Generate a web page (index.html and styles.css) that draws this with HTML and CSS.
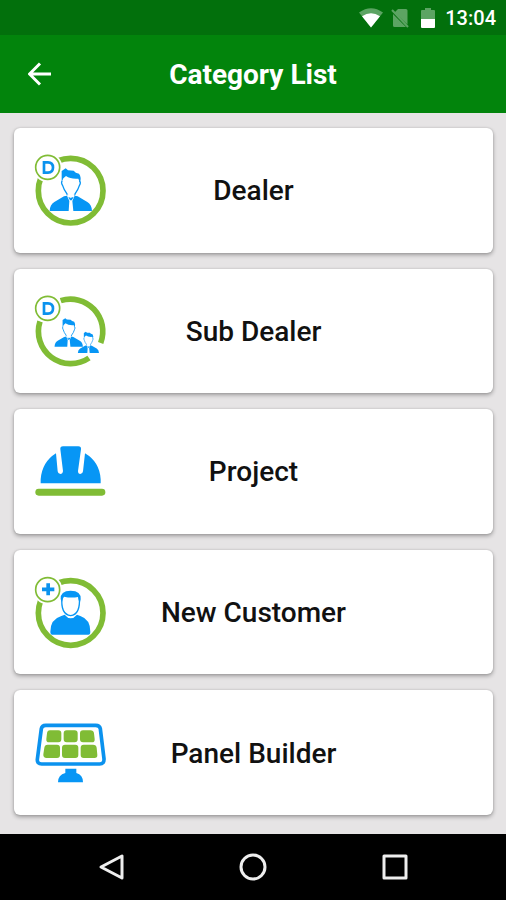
FILE: index.html
```html
<!DOCTYPE html>
<html lang="en">
<head>
<meta charset="utf-8">
<meta name="viewport" content="width=device-width, initial-scale=1">
<title>Category List</title>
<link rel="stylesheet" href="styles.css">
</head>
<body>
<div class="screen">
  <div class="status">
    <svg class="status-icon" viewBox="0 0 24 22" aria-hidden="true">
      <path class="dim" d="M0 5.500Q12-3 24 5.500L12 20.500Z"/>
      <path d="M3 9.200Q12 3.500 21 9.200L12 20.500Z"/>
    </svg>
    <svg class="status-icon sim" viewBox="0 0 18 22" aria-hidden="true">
      <path class="dim" d="M7 2h8q1.500 0 1.500 1.500v14L3.500 5.500ZM2 7l13 13H3.500Q2 20 2 18.500Z"/>
      <path class="slash" d="M1 3l16 17"/>
    </svg>
    <svg class="status-icon battery" viewBox="0 0 14 22" aria-hidden="true">
      <path class="dim" d="M4 1h6v2h3q1 0 1 1v8H0V4q0-1 1-1h3Z"/>
      <path d="M0 12h14v8q0 1-1 1H1q-1 0-1-1Z"/>
    </svg>
    <time class="clock">13:04</time>
  </div>

  <header class="app-bar">
    <button class="back" type="button" aria-label="Back">
      <svg viewBox="0 0 24 24" aria-hidden="true"><path d="M23 12H2M12 1.500L1.500 12L12 22.500"/></svg>
    </button>
    <h1 class="title">Category List</h1>
  </header>

  <main class="list">
    <button class="card" type="button">
      <svg class="icon" viewBox="45 43 216 216" aria-hidden="true">
        <circle class="ring" cx="152" cy="153" r="97"/>
        <circle class="gap" cx="83" cy="83" r="44"/>
        <circle class="badge" cx="83" cy="83" r="36"/>
        <path class="letter" d="M72 68H84Q99 68 99 83.500T84 99H72Z"/>
        <g id="person">
          <path class="blue" d="M125 128V94l12-8 7 6 17 1q5 7 16 9 8 10 3 27l-5-12q-23 2-37-8l-8 7Z"/>
          <path class="face" d="M127 124q-5 4 1 14 4 13 12 23l3 6M178 124q6 4 0 14-4 13-12 23l-3 6"/>
          <path class="blue" d="M89 214q1-20 14-27l29-17 9-2 7 16-2 30ZM216 214q-1-20-14-27l-29-17-9-2-7 16 3 30Z"/>
          <path class="blue" d="M145 173h16l-6 9h-5Z"/>
          <path class="tie" d="M141 165l11 9 11-9"/>
        </g>
      </svg>
      <span class="label">Dealer</span>
    </button>

    <button class="card" type="button">
      <svg class="icon" viewBox="45 30 216 216" aria-hidden="true">
        <path class="ring" d="M122 47A97 97 0 0 1 242 174M207 219A97 97 0 0 1 60 109"/>
        <circle class="gap" cx="83" cy="70" r="44"/>
        <circle class="badge" cx="83" cy="70" r="36"/>
        <path class="letter" d="M72 55H84Q99 55 99 70.500T84 86H72Z"/>
        <use href="#person" transform="translate(44 42) scale(.67)"/>
        <use href="#person" transform="translate(129 97) scale(.5)"/>
      </svg>
      <span class="label">Sub Dealer</span>
    </button>

    <button class="card" type="button">
      <svg class="icon" viewBox="45 17 216 216" aria-hidden="true">
        <path class="blue" d="M62 162V150Q66 98 108 72L113 126Q114 134 121 134T129 125L121 60Q120 51 129 51H175Q184 51 183 60L174 125Q174 134 181 134T189 126L195 72Q239 98 242 150V162Z"/>
        <rect class="green" x="46" y="178" width="210" height="21" rx="10"/>
      </svg>
      <span class="label">Project</span>
    </button>

    <button class="card" type="button">
      <svg class="icon" viewBox="45 33 216 216" aria-hidden="true">
        <circle class="ring" cx="152" cy="144" r="97"/>
        <circle class="gap" cx="83" cy="74" r="44"/>
        <circle class="badge" cx="83" cy="74" r="36"/>
        <path class="plus" d="M66 73H103M84.500 55V91"/>
        <path class="blue" d="M97 209Q91 209 91 200 91 163 124 153L134 149Q152 171 171 149L181 153Q211 163 211 200 211 209 205 209Z"/>
        <path class="face" d="M126 96Q121 148 152 152 182 148 178 96"/>
        <path class="blue" d="M122 103Q120 77 152 77T182 103L180 111Q176 111 174 96 153 100 132 95 129 98 126 111Z"/>
      </svg>
      <span class="label">New Customer</span>
    </button>

    <button class="card" type="button">
      <svg class="icon" viewBox="45 20 216 216" aria-hidden="true">
        <path class="panel" d="M77 45H227Q239 45 241 55L252 145Q253 161 239 161H65Q51 161 52 147L64 55Q66 45 77 45Z"/>
        <path class="green" d="M90 60H115Q124 60 124 69V87Q124 96 115 96H87Q78 96 79 86L81 69Q82 60 90 60ZM140 60H164Q173 60 173 69V87Q173 96 164 96H140Q131 96 131 87V69Q131 60 140 60ZM189 60H211Q221 60 222 69L224 86Q225 96 216 96H189Q180 96 180 87V69Q180 60 189 60ZM83 103H111Q120 103 120 112V134Q120 143 111 143H80Q69 143 70 132L73 112Q74 103 83 103ZM135 103H166Q175 103 175 112V134Q175 143 166 143H135Q126 143 126 134V112Q126 103 135 103ZM191 103H219Q229 103 230 112L232 133Q233 143 223 143H191Q182 143 182 134V112Q182 103 191 103Z"/>
        <path class="blue" d="M136 175H169V188Q189 193 189 216H114Q114 193 136 188Z"/>
      </svg>
      <span class="label">Panel Builder</span>
    </button>
  </main>

  <nav class="nav-bar" aria-label="System">
    <button class="nav-button" type="button" aria-label="Back">
      <svg viewBox="0 0 28 28" aria-hidden="true"><path d="M25 3V25L4 14Z"/></svg>
    </button>
    <button class="nav-button" type="button" aria-label="Home">
      <svg viewBox="0 0 28 28" aria-hidden="true"><circle cx="14" cy="14" r="12"/></svg>
    </button>
    <button class="nav-button" type="button" aria-label="Recent apps">
      <svg viewBox="0 0 28 28" aria-hidden="true"><rect x="3" y="3" width="22" height="22"/></svg>
    </button>
  </nav>
</div>
</body>
</html>
```

FILE: styles.css
```css
* {
  box-sizing: border-box;
}

body {
  margin: 0;
  font-family: Roboto, "Liberation Sans", sans-serif;
  background: #e6e4e5;
}

button {
  margin: 0;
  padding: 0;
  border: 0;
  background: none;
  font: inherit;
  color: inherit;
}

svg {
  display: block;
}

.screen {
  display: flex;
  flex-direction: column;
  min-height: 100vh;
}

.status {
  display: flex;
  align-items: center;
  justify-content: flex-end;
  gap: 8px;
  height: 35px;
  padding: 0 10px;
  background: #02700c;
  color: #fff;
}

.status-icon {
  height: 22px;
  fill: #fff;
}

.status-icon .dim {
  fill: #5ca463;
}

.status-icon.battery {
  margin-left: 4px;
}

.slash {
  stroke: #5ca463;
  stroke-width: 2;
}

.clock {
  margin-left: 2px;
  font-size: 20px;
  font-weight: 500;
  line-height: 24px;
}

.app-bar {
  display: grid;
  grid-template-columns: 80px 1fr 80px;
  align-items: center;
  height: 78px;
  background: #02840c;
  color: #fff;
}

.back {
  display: grid;
  place-items: center;
  height: 78px;
}

.back svg {
  width: 24px;
  height: 24px;
  fill: none;
  stroke: #fff;
  stroke-width: 3;
}

.title {
  margin: 0;
  padding-top: 2px;
  font-size: 28px;
  font-weight: 700;
  line-height: 32px;
  text-align: center;
}

.list {
  flex: 1;
  display: grid;
  grid-auto-rows: 1fr;
  gap: 16px;
  padding: 15px 13px 19px 14px;
}

.card {
  display: grid;
  grid-template-columns: 72px 1fr 72px;
  align-items: center;
  min-height: 112px;
  padding: 0 21px;
  border-radius: 6px;
  background: #fff;
  box-shadow: 0 2px 4px rgba(0, 0, 0, 0.32), 0 0 2px rgba(0, 0, 0, 0.16);
  color: #111;
}

.label {
  padding-top: 2px;
  font-size: 28px;
  font-weight: 500;
  line-height: 32px;
  text-align: center;
}

.icon {
  width: 72px;
  height: 72px;
  overflow: visible;
}

.ring {
  fill: none;
  stroke: #80bc35;
  stroke-width: 17;
}

.gap {
  fill: #fff;
}

.badge {
  fill: #fff;
  stroke: #80bc35;
  stroke-width: 5;
}

.letter {
  fill: none;
  stroke: #0b92ee;
  stroke-width: 8;
}

.plus {
  fill: none;
  stroke: #0b92ee;
  stroke-width: 11;
}

.blue {
  fill: #0796f5;
}

.green {
  fill: #80bc35;
}

.face {
  fill: none;
  stroke: #0796f5;
  stroke-width: 4;
}

.tie {
  fill: none;
  stroke: #fff;
  stroke-width: 3;
}

.panel {
  fill: #fff;
  stroke: #0b92ee;
  stroke-width: 11;
}

.nav-bar {
  display: grid;
  grid-template-columns: repeat(3, 28%);
  justify-content: center;
  height: 66px;
  background: #000;
}

.nav-button {
  display: grid;
  place-items: center;
}

.nav-button svg {
  width: 28px;
  height: 28px;
  fill: none;
  stroke: #eee;
  stroke-width: 3;
  stroke-linejoin: round;
}
```
